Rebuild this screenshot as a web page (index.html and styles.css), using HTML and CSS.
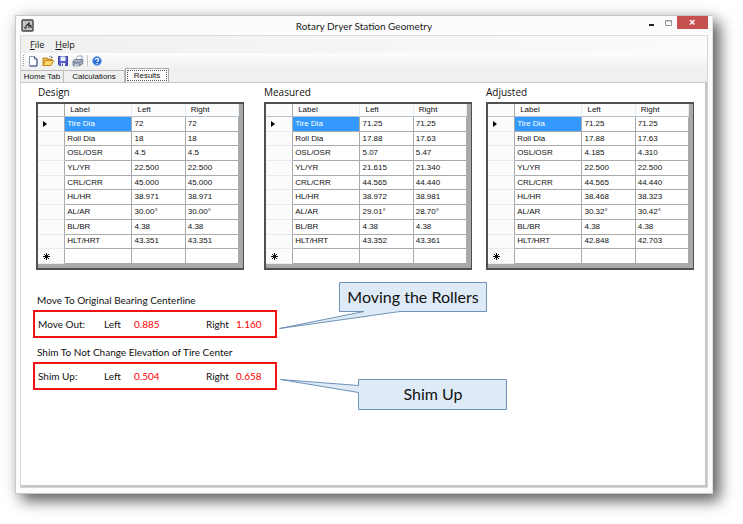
FILE: index.html
```
<!DOCTYPE html>
<html lang="en">
<head>
	<meta charset="UTF-8">
	<title>Rotary Dryer Station Geometry</title>
	<link rel="stylesheet" href="styles.css">
</head>
<body>
<div class="window">
	<header class="titlebar">
		<svg class="app-icon" width="13" height="13" viewBox="0 0 13 13">
			<rect x="1" y="1" width="11" height="11" rx="1" fill="#c4c4c4" stroke="#444" stroke-width="1.4"/>
			<path d="M3 9h2V7l3-3v5M8 6.500h2V9" fill="none" stroke="#222" stroke-width="1.1"/>
		</svg>
		<h1>Rotary Dryer Station Geometry</h1>
		<div class="controls">
			<button type="button" aria-label="Minimize"><svg width="7" height="12"><path d="M1 9h5" stroke="#222" stroke-width="2"/></svg></button>
			<button type="button" aria-label="Maximize"><svg width="7" height="12"><path d="M.5 4.5h6v5h-6zM0 5h7" fill="none" stroke="#999"/></svg></button>
			<button type="button" aria-label="Close" class="close"><svg width="7" height="7"><path d="M1 1l4.5 4.5M5.5 1L1 5.5" stroke="#fff" stroke-width="1.4"/></svg></button>
		</div>
	</header>

	<div class="client">
		<nav class="menu">
			<button type="button"><u>F</u>ile</button>
			<button type="button"><u>H</u>elp</button>
		</nav>
		<div class="toolbar">
			<span class="grip"></span>
			<button type="button" aria-label="New"><svg width="12" height="12" viewBox="0 0 12 12"><path d="M2.5 1.5h5L10 4v7H2.5z" fill="#fff" stroke="#8796ae"/><path d="M7.5 1.5V4H10v7H3" fill="none" stroke="#3c5585"/></svg></button>
			<button type="button" aria-label="Open"><svg width="12" height="12" viewBox="0 0 12 12"><path d="M1 10.5V3h4l1 1h4v2" fill="#e9b84c" stroke="#b98222"/><path d="M1 10.5l2.5-5h8L9 10.5z" fill="#ffd76e" stroke="#c08a20"/><path d="M7 2c1-1.5 3-1 3 .8M9 2.500h2" fill="none" stroke="#6d7d9c" stroke-width=".8"/></svg></button>
			<button type="button" aria-label="Save"><svg width="12" height="12" viewBox="0 0 12 12"><path d="M1.5 1.5h9v9h-8l-1-1z" fill="#555fc9" stroke="#3b43a0"/><path d="M3.5 1.5h5V6h-5z" fill="#e9eefc"/><path d="M4 8h4v3H4z" fill="#fff"/><path d="M5 8.5h1V11H5z" fill="#3b43a0"/></svg></button>
			<button type="button" aria-label="Print"><svg width="12" height="12" viewBox="0 0 12 12"><path d="M4 5l1.500-4h5L9 5" fill="#fff" stroke="#8a98b0" stroke-width=".8"/><path d="M1 6l2-1.5h8L10.5 9 8 10.5H1z" fill="#a8b3c6" stroke="#5e6b82" stroke-width=".8"/><path d="M1 7.5h7l3-2" fill="none" stroke="#6c7890" stroke-width=".8"/><path d="M2 9h5.5L7 11H1.5z" fill="#e8edf5" stroke="#5e6b82" stroke-width=".6"/></svg></button>
			<span class="divider"></span>
			<button type="button" aria-label="Help"><svg width="12" height="12" viewBox="0 0 12 12"><circle cx="6" cy="6" r="4.5" fill="#2f6fd6" stroke="#8db3ec"/><path d="M4.5 5c0-2 3.2-2 3.2-.2C7.7 5.9 6.1 6 6.1 7M6.1 8v1.2" fill="none" stroke="#fff" stroke-width="1.2"/></svg></button>
		</div>
		<div class="tabs" role="tablist">
			<button type="button" role="tab">Home Tab</button>
			<button type="button" role="tab" class="wide">Calculations</button>
			<button type="button" role="tab" class="active" aria-selected="true"><span>Results</span></button>
		</div>

		<main class="page">
			<div class="grids">
				<section class="design">
					<h2>Design</h2>
					<div class="grid">
						<table>
							<thead><tr><th class="mark"></th><th>Label</th><th>Left</th><th>Right</th></tr></thead>
							<tbody>
								<tr><th class="mark"><i class="arrow"></i></th><td class="selected">Tire Dia</td><td>72</td><td>72</td></tr>
								<tr><th class="mark"></th><td>Roll Dia</td><td>18</td><td>18</td></tr>
								<tr><th class="mark"></th><td>OSL/OSR</td><td>4.5</td><td>4.5</td></tr>
								<tr><th class="mark"></th><td>YL/YR</td><td>22.500</td><td>22.500</td></tr>
								<tr><th class="mark"></th><td>CRL/CRR</td><td>45.000</td><td>45.000</td></tr>
								<tr><th class="mark"></th><td>HL/HR</td><td>38.971</td><td>38.971</td></tr>
								<tr><th class="mark"></th><td>AL/AR</td><td>30.00°</td><td>30.00°</td></tr>
								<tr><th class="mark"></th><td>BL/BR</td><td>4.38</td><td>4.38</td></tr>
								<tr><th class="mark"></th><td>HLT/HRT</td><td>43.351</td><td>43.351</td></tr>
								<tr><th class="mark"><svg class="star" width="7" height="7"><path d="M3.5 0v7M0 3.5h7M1 1l5 5M6 1L1 6" stroke="#111"/></svg></th><td></td><td></td><td></td></tr>
							</tbody>
						</table>
					</div>
				</section>
				<section class="measured">
					<h2>Measured</h2>
					<div class="grid">
						<table>
							<thead><tr><th class="mark"></th><th>Label</th><th>Left</th><th>Right</th></tr></thead>
							<tbody>
								<tr><th class="mark"><i class="arrow"></i></th><td class="selected">Tire Dia</td><td>71.25</td><td>71.25</td></tr>
								<tr><th class="mark"></th><td>Roll Dia</td><td>17.88</td><td>17.63</td></tr>
								<tr><th class="mark"></th><td>OSL/OSR</td><td>5.07</td><td>5.47</td></tr>
								<tr><th class="mark"></th><td>YL/YR</td><td>21.615</td><td>21.340</td></tr>
								<tr><th class="mark"></th><td>CRL/CRR</td><td>44.565</td><td>44.440</td></tr>
								<tr><th class="mark"></th><td>HL/HR</td><td>38.972</td><td>38.981</td></tr>
								<tr><th class="mark"></th><td>AL/AR</td><td>29.01°</td><td>28.70°</td></tr>
								<tr><th class="mark"></th><td>BL/BR</td><td>4.38</td><td>4.38</td></tr>
								<tr><th class="mark"></th><td>HLT/HRT</td><td>43.352</td><td>43.361</td></tr>
								<tr><th class="mark"><svg class="star" width="7" height="7"><path d="M3.5 0v7M0 3.5h7M1 1l5 5M6 1L1 6" stroke="#111"/></svg></th><td></td><td></td><td></td></tr>
							</tbody>
						</table>
					</div>
				</section>
				<section class="adjusted">
					<h2>Adjusted</h2>
					<div class="grid">
						<table>
							<thead><tr><th class="mark"></th><th>Label</th><th>Left</th><th>Right</th></tr></thead>
							<tbody>
								<tr><th class="mark"><i class="arrow"></i></th><td class="selected">Tire Dia</td><td>71.25</td><td>71.25</td></tr>
								<tr><th class="mark"></th><td>Roll Dia</td><td>17.88</td><td>17.63</td></tr>
								<tr><th class="mark"></th><td>OSL/OSR</td><td>4.185</td><td>4.310</td></tr>
								<tr><th class="mark"></th><td>YL/YR</td><td>22.500</td><td>22.500</td></tr>
								<tr><th class="mark"></th><td>CRL/CRR</td><td>44.565</td><td>44.440</td></tr>
								<tr><th class="mark"></th><td>HL/HR</td><td>38.468</td><td>38.323</td></tr>
								<tr><th class="mark"></th><td>AL/AR</td><td>30.32°</td><td>30.42°</td></tr>
								<tr><th class="mark"></th><td>BL/BR</td><td>4.38</td><td>4.38</td></tr>
								<tr><th class="mark"></th><td>HLT/HRT</td><td>42.848</td><td>42.703</td></tr>
								<tr><th class="mark"><svg class="star" width="7" height="7"><path d="M3.5 0v7M0 3.5h7M1 1l5 5M6 1L1 6" stroke="#111"/></svg></th><td></td><td></td><td></td></tr>
							</tbody>
						</table>
					</div>
				</section>
			</div>

			<div class="moves">
				<h3>Move To Original Bearing Centerline</h3>
				<div class="move">
					<span>Move Out:</span><span>Left</span><b>0.885</b><span>Right</span><b>1.160</b>
				</div>
				<h3>Shim To Not Change Elevation of Tire Center</h3>
				<div class="move">
					<span>Shim Up:</span><span>Left</span><b>0.504</b><span>Right</span><b>0.658</b>
				</div>

				<!-- callouts float over the page, tails point back at the red boxes -->
				<div class="callout rollers">
					<svg width="208" height="48"><path d="M60.5.5h147v29H121L.5 46.5l84.500-17H60.5z"/></svg>
					<p>Moving the Rollers</p>
				</div>
				<div class="callout shim">
					<svg width="227" height="31"><path d="M78.5.5h148v30h-148v-17L.5.5l78 6z"/></svg>
					<p>Shim Up</p>
				</div>
			</div>
		</main>
	</div>
</div>
</body>
</html>
```

FILE: styles.css
```
*{ margin:0; padding:0; box-sizing:border-box;}
body{ background:#fff; font-family:Lato,"Open Sans",sans-serif; font-size:10px; color:#111;}
button{ border:0; background:none; color:inherit; font:inherit;}
h1,h2,h3{ font-weight:normal;}

.window{ display:flex; flex-direction:column; min-height:calc(100vh - 45px); margin:15px 30px 30px 15px; padding:0 4px 5px; border:1px solid #c8c8c8; border-right-color:#e4e4e4; background:#fcfcfc; box-shadow:7px 7px 14px rgba(0,0,0,.6), 0 0 14px rgba(0,0,0,.12);}

.titlebar{ display:grid; grid-template-columns:1fr auto 1fr; height:19px;}
.app-icon{ margin:3px 0 0 1px;}
.titlebar h1{ font-size:10px; line-height:20px; color:#222;}
.controls{ display:flex; justify-content:flex-end; align-items:flex-start; gap:10px;}
.controls svg{ display:block;}
.controls .close{ display:flex; align-items:center; justify-content:center; width:31px; height:13px; margin-left:-5px; background:#c75050;}

.client{ flex:1; display:flex; flex-direction:column; border:1px solid #d5d5d5; border-top-color:#ddd; background:#f0f0f0;}
.menu{ display:flex; gap:11px; height:17px; padding-left:9px; background:linear-gradient(90deg,#f0f0f0,#fbfbfb); font-family:"Open Sans",sans-serif; font-size:9px;}
.toolbar{ display:flex; align-items:center; gap:3px; height:15px; padding-left:2px; background:linear-gradient(#fdfdfd,#f1f1f1);}
.toolbar button,.toolbar svg{ display:block; width:12px; height:12px;}
.grip{ width:1px; height:11px; border-left:1px dotted #999;}
.divider{ width:1px; height:11px; background:#c5c5c5;}
.tabs{ display:flex; align-items:flex-end; height:14px; font-family:"Liberation Sans",sans-serif; font-size:8px; line-height:10px;}
.tabs button{ width:43px; height:12px; border:1px solid #bbb; border-width:1px 1px 0 0; white-space:nowrap;}
.tabs .wide{ width:61px;}
.tabs .active{ width:44px; height:14px; padding:1px; border-color:#aaa; border-left-width:1px; background:#fff;}
.tabs .active span{ display:block; border:1px dotted #555; line-height:9px;}

.page{ flex:1; padding:0 12px; border:1px solid #c5c5c5; border-width:1px 2px 2px 0; background:#fff;}
.grids{ display:flex; padding-left:3px;}
.grids h2{ font-family:"Open Sans",sans-serif; font-size:10px; line-height:19px;}
.design h2{ padding-left:2px;}
.measured{ margin-left:20px;}
.adjusted{ margin-left:14px;}
.grid{ width:208px; padding:0 5px 4px 0; border:2px solid #505050; border-right-width:1px; background:#a9a9a9;}
table{ width:201px; height:160px; border-spacing:0; table-layout:fixed; background:#fff; font-family:"Liberation Sans",sans-serif; font-size:8px; line-height:12px;}
th,td{ height:14px; padding:0 0 0 2px; border:1px solid #aaa; border-width:0 1px 1px 0; font-weight:normal; text-align:left;}
thead th{ width:53px; height:13px; padding-left:5px; border-right-color:#e3edf6; border-bottom-color:#b4c0cc; background:#fcfcfd;}
thead th:nth-child(2){ width:67px;}
thead .mark{ width:27px; border-right-color:#aaa;}
tbody .mark{ padding-left:5px; border-bottom-color:#e3edf6; background:#fcfcfd;}
.selected{ background:#3399ff; color:#fff;}
.arrow{ display:block; width:4px; border:solid transparent; border-width:3px 0 3px 4px; border-left-color:#000;}
.star{ display:block;}

.moves{ position:relative; width:244px; margin-top:20px;}
.moves h3{ padding-left:4px; font-size:10px; line-height:20px; white-space:nowrap;}
.move{ display:grid; grid-template-columns:66px 30px 72px 30px auto; align-items:center; height:28px; margin-bottom:4px; padding-left:3px; border:2px solid #f01414;}
.move b{ font-weight:normal; color:#f00;}

.callout{ position:absolute; font-size:16px;}
.callout svg{ display:block;}
.callout path{ fill:#deebf7; stroke:#6f93b8;}
.callout p{ position:absolute; top:0; right:0; width:148px; line-height:30px; text-align:center; white-space:nowrap;}
.rollers{ left:246px; top:-8px;}
.shim{ left:247px; top:89px;}
```
